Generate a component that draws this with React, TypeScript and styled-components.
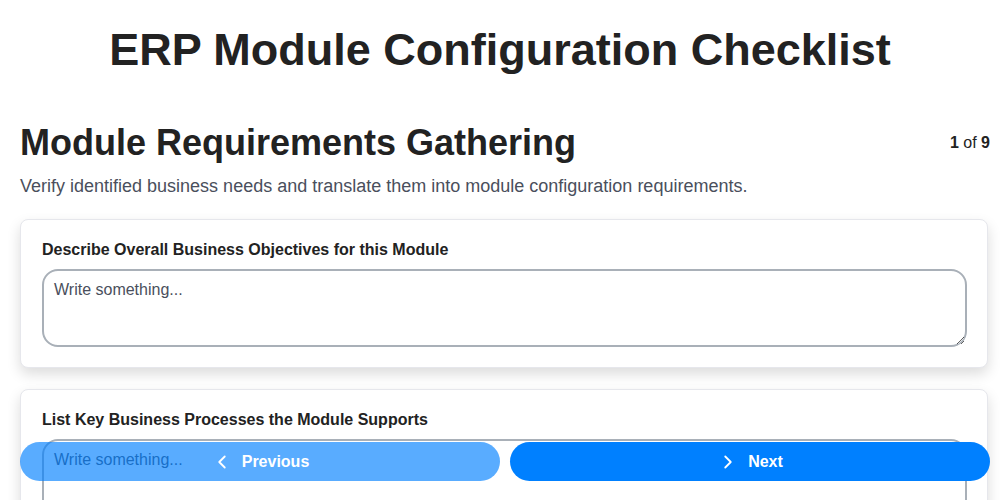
import React from "react";
import styled, { createGlobalStyle } from "styled-components";
import { ChevronLeft, ChevronRight } from "lucide-react";

const Global = createGlobalStyle`
  html, body { margin: 0; padding: 0; background: #fff; }
  body { font-family: "Liberation Sans", Arial, sans-serif; color: #222; }
  * { box-sizing: border-box; }
`;

const Page = styled.div`
  display: flex;
  flex-direction: column;
`;

const Content = styled.main`
  padding: 0 10px 0 20px;
  display: flex;
  flex-direction: column;
`;

const Title = styled.h1`
  margin: 25px 0 0;
  font-size: 45px;
  line-height: 50px;
  font-weight: 700;
  text-align: center;
  color: #222;
`;

const StepHeader = styled.div`
  display: flex;
  justify-content: space-between;
  align-items: center;
  margin-top: 47px;
`;

const StepTitle = styled.h2`
  margin: 0;
  font-size: 36px;
  line-height: 42px;
  font-weight: 700;
  color: #222;
`;

const Counter = styled.div`
  font-size: 16px;
  color: #222;
  b { font-weight: 700; }
`;

const Subtitle = styled.p`
  margin: 10px 0 0;
  font-size: 18px;
  line-height: 24px;
  color: #4a4f5c;
`;

const Cards = styled.div`
  display: flex;
  flex-direction: column;
  gap: 21px;
  margin-top: 21px;
  padding-right: 2px;
  padding-bottom: 120px;
`;

const Card = styled.div`
  background: #fff;
  border: 1px solid #e6e7ec;
  border-radius: 8px;
  padding: 20px 20px 20px 21px;
  box-shadow: 0 6px 14px rgba(0, 0, 0, 0.14);
  display: flex;
  flex-direction: column;
  gap: 9px;
`;

const Label = styled.label`
  font-size: 16px;
  line-height: 20px;
  font-weight: 700;
  color: #222;
`;

const TextArea = styled.textarea`
  height: 78px;
  border: 2px solid #a9b0b8;
  border-radius: 16px;
  padding: 9px 10px;
  font-family: "Liberation Sans", Arial, sans-serif;
  font-size: 16px;
  line-height: 20px;
  resize: vertical;
  outline: none;
  &::placeholder { color: #4a4f5c; }
`;

const NavBar = styled.div`
  position: fixed;
  left: 20px;
  right: 10px;
  bottom: 19px;
  display: grid;
  grid-template-columns: 1fr 1fr;
  gap: 10px;
`;

const NavButton = styled.button<{ $faded?: boolean }>`
  height: 39px;
  border: none;
  border-radius: 20px;
  background: #0080ff;
  opacity: ${(p) => (p.$faded ? 0.65 : 1)};
  color: #fff;
  font-family: "Liberation Sans", Arial, sans-serif;
  font-weight: 700;
  font-size: 16px;
  display: flex;
  align-items: center;
  justify-content: center;
  gap: 9px;
  cursor: pointer;
`;

const fields = [
  "Describe Overall Business Objectives for this Module",
  "List Key Business Processes the Module Supports",
];

export default function App() {
  return (
    <>
      <Global />
      <Page>
        <Title>ERP Module Configuration Checklist</Title>
        <Content>
          <StepHeader>
            <StepTitle>Module Requirements Gathering</StepTitle>
            <Counter>
              <b>1</b> of <b>9</b>
            </Counter>
          </StepHeader>
          <Subtitle>
            Verify identified business needs and translate them into module configuration requirements.
          </Subtitle>
          <Cards>
            {fields.map((f) => (
              <Card key={f}>
                <Label>{f}</Label>
                <TextArea placeholder="Write something..." />
              </Card>
            ))}
          </Cards>
        </Content>
      </Page>
      <NavBar>
        <NavButton $faded>
          <ChevronLeft size={22} strokeWidth={2} />
          Previous
        </NavButton>
        <NavButton>
          <ChevronRight size={22} strokeWidth={2} />
          Next
        </NavButton>
      </NavBar>
    </>
  );
}
